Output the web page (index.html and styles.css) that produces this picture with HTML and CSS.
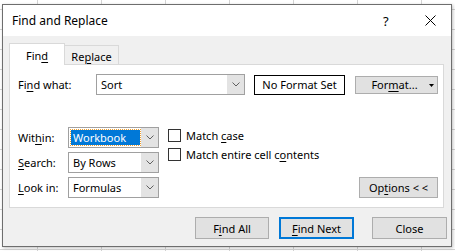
FILE: index.html
```html
<!DOCTYPE html>
<html lang="en">
<head>
    <meta charset="UTF-8">
    <title>Find and Replace</title>
    <link rel="stylesheet" href="styles.css">
</head>
<body>
    <div class="dialog">
        <div class="titlebar">
            <span class="title">Find and Replace</span>
            <span class="help">?</span>
            <svg class="close-x" width="11" height="11" viewBox="0 0 11 11">
                <path d="M0.5 0.5 L10.5 10.5 M10.5 0.5 L0.5 10.5" stroke="#000" stroke-width="1" fill="none"/>
            </svg>
        </div>
        <div class="content">
            <div class="tabs">
                <div class="tab active"><span>Fin<u>d</u></span></div>
                <div class="tab"><span>Re<u>p</u>lace</span></div>
            </div>
            <div class="panel">
                <div class="find-row">
                    <span class="label label-find">Fi<u>n</u>d what:</span>
                    <div class="combo combo-find">
                        <span class="combo-text">Sort</span>
                        <span class="combo-btn">
                            <svg width="8" height="5" viewBox="0 0 8 5"><polyline points="0.5,0.5 4,4 7.5,0.5" stroke="#606060" fill="none"/></svg>
                        </span>
                    </div>
                    <div class="format-box">No Format Set</div>
                    <button class="btn btn-format"><span>For<u>m</u>at...</span>
                        <svg class="caret" width="5" height="3" viewBox="0 0 5 3"><polygon points="0,0 5,0 2.5,3" fill="#000"/></svg>
                    </button>
                </div>
                <div class="options-row">
                    <div class="selects">
                        <div class="select-row">
                            <span class="label label-opt">Wit<u>h</u>in:</span>
                            <div class="combo combo-opt">
                                <span class="combo-text"><span class="selected">Workbook</span></span>
                                <span class="combo-btn">
                                    <svg width="8" height="5" viewBox="0 0 8 5"><polyline points="0.5,0.5 4,4 7.5,0.5" stroke="#606060" fill="none"/></svg>
                                </span>
                            </div>
                        </div>
                        <div class="select-row">
                            <span class="label label-opt"><u>S</u>earch:</span>
                            <div class="combo combo-opt">
                                <span class="combo-text">By Rows</span>
                                <span class="combo-btn">
                                    <svg width="8" height="5" viewBox="0 0 8 5"><polyline points="0.5,0.5 4,4 7.5,0.5" stroke="#606060" fill="none"/></svg>
                                </span>
                            </div>
                        </div>
                        <div class="select-row">
                            <span class="label label-opt"><u>L</u>ook in:</span>
                            <div class="combo combo-opt">
                                <span class="combo-text">Formulas</span>
                                <span class="combo-btn">
                                    <svg width="8" height="5" viewBox="0 0 8 5"><polyline points="0.5,0.5 4,4 7.5,0.5" stroke="#606060" fill="none"/></svg>
                                </span>
                            </div>
                        </div>
                    </div>
                    <div class="checks">
                        <div class="check-row"><span class="checkbox"></span><span>Match <u>c</u>ase</span></div>
                        <div class="check-row"><span class="checkbox"></span><span>Match entire cell c<u>o</u>ntents</span></div>
                    </div>
                    <button class="btn btn-options"><span>Op<u>t</u>ions &lt; &lt;</span></button>
                </div>
            </div>
            <div class="actions">
                <button class="btn btn-action btn-findall"><span>F<u>i</u>nd All</span></button>
                <button class="btn btn-action btn-findnext"><span><u>F</u>ind Next</span></button>
                <button class="btn btn-action btn-close"><span>Close</span></button>
            </div>
        </div>
    </div>
</body>
</html>
```

FILE: styles.css
```css
* {
    margin: 0;
    padding: 0;
    box-sizing: border-box;
}
body {
    width: 455px;
    height: 251px;
    overflow: hidden;
    font-family: 'Noto Sans', sans-serif;
    font-size: 11px;
    color: #000;
    background-color: #fff;
    background-image:
        linear-gradient(to right, #d4d4d4 1px, transparent 1px),
        linear-gradient(to bottom, #d4d4d4 1px, transparent 1px);
    background-size: 64px 20px;
    background-position: 37px 9px;
    padding: 4px 0 0 2px;
}
u {
    text-decoration: underline;
    text-underline-offset: 2px;
}
.dialog {
    width: 450px;
    height: 243px;
    border: 1px solid #6e6e6e;
    box-shadow: 1px 1px 3px rgba(0,0,0,0.25);
    display: flex;
    flex-direction: column;
    background-color: #f0f0f0;
}
.titlebar {
    height: 31px;
    background-color: #fff;
    display: flex;
    align-items: center;
    padding-left: 9px;
    flex-shrink: 0;
}
.title {
    flex: 1;
    font-size: 12px;
}
.help {
    font-size: 13px;
    width: 6px;
    margin-right: 36px;
}
.close-x {
    margin-right: 15px;
}
.content {
    flex: 1;
    padding: 7px 7px 0 6px;
}
.tabs {
    display: flex;
    align-items: flex-end;
    height: 21px;
}
.tab {
    height: 19px;
    width: 55px;
    margin-left: -1px;
    border: 1px solid #d9d9d9;
    border-bottom: none;
    background-color: #f0f0f0;
    display: flex;
    align-items: center;
    justify-content: center;
    padding-top: 2px;
}
.tab.active {
    height: 22px;
    width: 56px;
    margin-left: 0;
    margin-bottom: -1px;
    background-color: #fff;
    position: relative;
    z-index: 1;
}
.panel {
    height: 144px;
    border: 1px solid #d9d9d9;
    background-color: #fff;
    padding: 9px 5px 0 8px;
}
.find-row {
    display: flex;
    align-items: center;
    height: 21px;
}
.label-find {
    width: 78px;
}
.label-opt {
    width: 50px;
}
.combo {
    height: 21px;
    border: 1px solid #a0a0a0;
    display: flex;
    background-color: #fff;
}
.combo-find {
    width: 149px;
}
.combo-opt {
    width: 91px;
}
.combo-text {
    flex: 1;
    display: flex;
    align-items: center;
    padding-left: 4px;
}
.combo-btn {
    width: 17px;
    background-color: #e3e3e3;
    display: flex;
    align-items: center;
    justify-content: center;
}
.selected {
    background-color: #0078d7;
    color: #fff;
    outline: 1px dotted #f0a030;
    padding: 0 2px;
    margin-left: -2px;
    line-height: 15px;
    width: 69px;
}
.format-box {
    width: 91px;
    height: 20px;
    margin-left: 9px;
    border: 1px solid #000;
    display: flex;
    align-items: center;
    justify-content: center;
}
.btn {
    font-family: inherit;
    font-size: inherit;
    color: #000;
    background-color: #e1e1e1;
    border: 1px solid #adadad;
    display: flex;
    align-items: center;
    justify-content: center;
}
.btn-format {
    width: 83px;
    height: 18px;
    margin-left: 10px;
    position: relative;
    padding-right: 4px;
}
.caret {
    position: absolute;
    right: 3px;
    top: 7px;
}
.options-row {
    display: flex;
    margin-top: 32px;
}
.selects {
    display: flex;
    flex-direction: column;
    gap: 4px;
}
.select-row {
    display: flex;
    align-items: center;
}
.checks {
    flex: 1;
    margin-left: 9px;
    padding-top: 2px;
    display: flex;
    flex-direction: column;
    gap: 6px;
}
.check-row {
    display: flex;
    align-items: center;
    height: 13px;
}
.checkbox {
    width: 13px;
    height: 13px;
    border: 1px solid #333;
    margin-right: 5px;
}
.btn-options {
    width: 79px;
    height: 21px;
    align-self: flex-end;
}
.actions {
    display: flex;
    justify-content: flex-end;
    margin-top: 9px;
    margin-right: -3px;
}
.btn-action {
    width: 75px;
    height: 22px;
}
.btn-findall {
    width: 74px;
}
.btn-findnext {
    margin-left: 10px;
    border: 2px solid #0078d7;
}
.btn-close {
    margin-left: 18px;
}
```
